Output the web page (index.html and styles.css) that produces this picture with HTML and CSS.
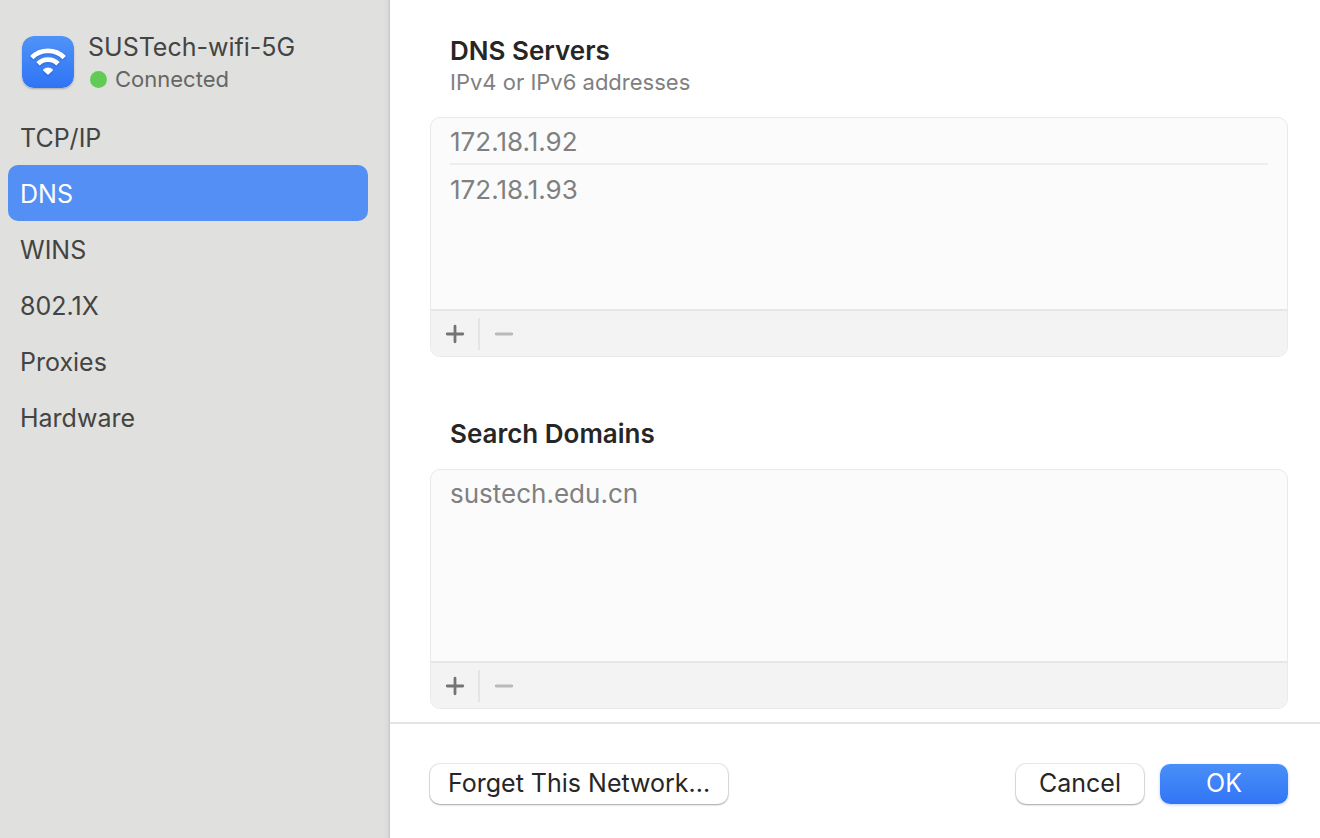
FILE: index.html
```html
<!DOCTYPE html>
<html lang="en">
<head>
<meta charset="utf-8">
<meta name="viewport" content="width=device-width, initial-scale=1">
<title>SUSTech-wifi-5G</title>
<link rel="stylesheet" href="styles.css">
</head>
<body>
<div class="window">
  <aside class="sidebar">
    <header class="network">
      <svg class="network-icon" viewBox="0 0 52 52" aria-hidden="true">
        <defs>
          <linearGradient id="tile" x1="0" y1="0" x2="0" y2="1">
            <stop offset="0" stop-color="#4f93f8"/>
            <stop offset="1" stop-color="#3074f6"/>
          </linearGradient>
        </defs>
        <rect width="52" height="52" rx="12" fill="url(#tile)"/>
        <g class="waves">
          <path d="M9.8 21.6A23 23 0 0 1 42.2 21.6" fill="none" stroke="#fff" stroke-width="4.8"/>
          <path d="M16 27.8A14.2 14.2 0 0 1 36 27.8" fill="none" stroke="#fff" stroke-width="4.8"/>
          <path d="M21.4 33.2A6.8 6.8 0 0 1 30.6 33.2Q31.3 34 30.6 34.7L26.8 38.3Q26 39 25.2 38.3L21.4 34.7Q20.7 34 21.4 33.2Z" fill="#fff"/>
        </g>
      </svg>
      <div class="network-text">
        <h1 class="network-name">SUSTech-wifi-5G</h1>
        <p class="status"><span class="status-dot"></span>Connected</p>
      </div>
    </header>
    <nav class="nav">
      <button class="nav-item" type="button">TCP/IP</button>
      <button class="nav-item nav-item-selected" type="button" aria-current="page">DNS</button>
      <button class="nav-item" type="button">WINS</button>
      <button class="nav-item" type="button">802.1X</button>
      <button class="nav-item" type="button">Proxies</button>
      <button class="nav-item" type="button">Hardware</button>
    </nav>
  </aside>
  <main class="main">
    <div class="content">
      <section class="group">
        <div class="group-head">
          <h2 class="group-title">DNS Servers</h2>
          <p class="group-note">IPv4 or IPv6 addresses</p>
        </div>
        <div class="box">
          <ul class="rows">
            <li class="row">172.18.1.92</li>
            <li class="row">172.18.1.93</li>
          </ul>
          <div class="tools">
            <button class="tool" type="button" aria-label="Add server"><svg class="tool-icon" viewBox="0 0 20 20"><path d="M2.2 10H17.8M10 2.2V17.8"/></svg></button>
            <button class="tool" type="button" aria-label="Remove server" disabled><svg class="tool-icon" viewBox="0 0 20 20"><path d="M2.2 10H17.8"/></svg></button>
          </div>
        </div>
      </section>
      <section class="group">
        <div class="group-head">
          <h2 class="group-title">Search Domains</h2>
        </div>
        <div class="box">
          <ul class="rows">
            <li class="row">sustech.edu.cn</li>
          </ul>
          <div class="tools">
            <button class="tool" type="button" aria-label="Add domain"><svg class="tool-icon" viewBox="0 0 20 20"><path d="M2.2 10H17.8M10 2.2V17.8"/></svg></button>
            <button class="tool" type="button" aria-label="Remove domain" disabled><svg class="tool-icon" viewBox="0 0 20 20"><path d="M2.2 10H17.8"/></svg></button>
          </div>
        </div>
      </section>
    </div>
    <footer class="actions">
      <button class="button" type="button">Forget This Network...</button>
      <div class="actions-end">
        <button class="button button-wide" type="button">Cancel</button>
        <button class="button button-wide button-primary" type="button">OK</button>
      </div>
    </footer>
  </main>
</div>
</body>
</html>
```
FILE: styles.css
```css
* {
  box-sizing: border-box;
}

body,
h1,
h2,
p,
ul {
  margin: 0;
  padding: 0;
}

body,
button {
  font-family: Inter, "Liberation Sans", sans-serif;
  font-size: 25px;
  font-weight: 400;
  line-height: 32px;
}

button {
  margin: 0;
  padding: 0;
  border: 0;
  background: none;
}

.window {
  display: flex;
  min-height: 100vh;
  background: #fff;
  color: #262626;
}

.sidebar {
  flex: 0 0 390px;
  padding: 31px 22px 20px 8px;
  background: linear-gradient(to left, #c4c4c3, #d9d9d8 2px, #e0e0de 6px);
  color: #444442;
}

.network {
  display: flex;
  align-items: flex-start;
  gap: 14px;
  padding-left: 14px;
}

.network-icon {
  width: 52px;
  height: 52px;
  margin-top: 5px;
  border-radius: 12px;
  box-shadow: 0 1px 2px rgba(0, 0, 0, 0.25);
}

.waves {
  filter: drop-shadow(0 1px 1px rgba(0, 40, 140, 0.3));
}

.network-name {
  font-size: 25px;
  font-weight: 400;
}

.status {
  display: flex;
  align-items: center;
  gap: 8px;
  font-size: 22px;
  color: #666664;
}

.status-dot {
  width: 17px;
  height: 17px;
  margin-left: 2px;
  border-radius: 50%;
  background: #62cb56;
}

.nav {
  display: flex;
  flex-direction: column;
  margin-top: 14px;
}

.nav-item {
  padding: 13px 12px 11px;
  border-radius: 10px;
  color: inherit;
  text-align: left;
}

.nav-item-selected {
  background: #538ff4;
  color: #fff;
}

.main {
  flex: 1;
  display: flex;
  flex-direction: column;
  min-width: 0;
}

.content {
  flex: 1;
  display: flex;
  flex-direction: column;
  gap: 61px;
  padding: 35px 32px 13px 40px;
}

.group-head {
  padding: 0 20px;
}

.group-title {
  font-size: 26px;
  font-weight: 600;
}

.group-note {
  font-size: 22px;
  line-height: 31px;
  color: #808080;
}

.box {
  margin-top: 19px;
  border: 1px solid #e9e9e9;
  border-radius: 10px;
  background: #fbfbfb;
  overflow: hidden;
}

.rows {
  min-height: 191px;
  padding: 0 19px;
  list-style: none;
  font-size: 26px;
  color: #808080;
}

.row {
  padding: 8px 0 7px;
}

.row + .row {
  padding-top: 9px;
  box-shadow: 0 -2px #ededed;
}

.tools {
  display: flex;
  align-items: center;
  height: 47px;
  border-top: 2px solid #e6e6e6;
  background: #f3f3f3;
}

.tool {
  display: flex;
  align-items: center;
  justify-content: center;
  width: 47px;
  height: 32px;
  color: #747474;
}

.tool + .tool {
  width: 50px;
  border-left: 2px solid #e4e4e4;
  color: #b9b9b9;
}

.tool-icon {
  width: 20px;
  height: 20px;
  fill: none;
  stroke: currentColor;
  stroke-width: 2.8;
  stroke-linecap: round;
}

.actions {
  display: flex;
  align-items: center;
  justify-content: space-between;
  padding: 40px 32px 34px 40px;
  border-top: 2px solid #e4e4e4;
}

.actions-end {
  display: flex;
  gap: 16px;
}

.button {
  height: 40px;
  padding: 0 18px 2px;
  border-radius: 10px;
  background: #fff;
  box-shadow: 0 0 0 1px rgba(0, 0, 0, 0.08), 0 1px 2px rgba(0, 0, 0, 0.3);
  color: #262626;
}

.button-wide {
  width: 128px;
}

.button-primary {
  background: linear-gradient(#4a8ff8, #3175f6);
  box-shadow: 0 1px 3px rgba(49, 117, 246, 0.35);
  color: #fff;
}
```
